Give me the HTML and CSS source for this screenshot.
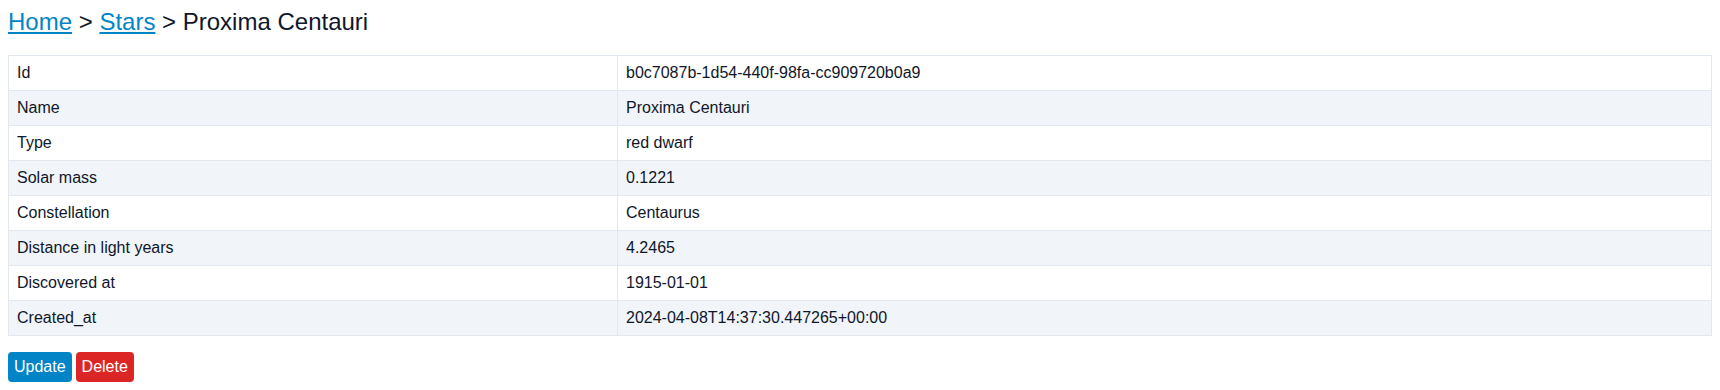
FILE: index.html
```html
<!DOCTYPE html>
<html lang="en">
<head>
<meta charset="utf-8">
<title>Proxima Centauri</title>
<link rel="stylesheet" href="styles.css">
</head>
<body>
<main class="page">
  <h1 class="crumbs"><a href="#">Home</a> &gt; <a href="#">Stars</a> &gt; Proxima Centauri</h1>
  <table class="details">
    <colgroup><col class="col-label"><col></colgroup>
    <tbody>
      <tr><td>Id</td><td>b0c7087b-1d54-440f-98fa-cc909720b0a9</td></tr>
      <tr><td>Name</td><td>Proxima Centauri</td></tr>
      <tr><td>Type</td><td>red dwarf</td></tr>
      <tr><td>Solar mass</td><td>0.1221</td></tr>
      <tr><td>Constellation</td><td>Centaurus</td></tr>
      <tr><td>Distance in light years</td><td>4.2465</td></tr>
      <tr><td>Discovered at</td><td>1915-01-01</td></tr>
      <tr><td>Created_at</td><td>2024-04-08T14:37:30.447265+00:00</td></tr>
    </tbody>
  </table>
  <div class="actions">
    <button class="btn btn-blue" type="button">Update</button>
    <button class="btn btn-red" type="button">Delete</button>
  </div>
</main>
</body>
</html>
```

FILE: styles.css
```css
html, body {
  margin: 0;
  padding: 0;
  background: #ffffff;
}
body {
  padding: 8px;
  font-family: "Liberation Sans", Arial, Helvetica, sans-serif;
  color: #0f172a;
  font-size: 16px;
}
.page {
  display: flex;
  flex-direction: column;
}
.crumbs {
  margin: 0 0 20px 0;
  font-size: 24px;
  font-weight: 400;
  line-height: 27px;
}
.crumbs a {
  color: #0284c7;
  text-decoration: underline;
}
.details {
  width: 100%;
  border-collapse: collapse;
  table-layout: fixed;
  border: 1px solid #e2e8f0;
}
.col-label {
  width: 609px;
}
.details td {
  border: 1px solid #e2e8f0;
  padding: 8px;
  line-height: 18px;
  text-align: left;
  vertical-align: middle;
}
.details tr:nth-child(even) td {
  background: #f1f5f9;
}
.actions {
  margin-top: 16px;
  display: flex;
  gap: 4px;
}
.btn {
  font-family: inherit;
  font-size: 16px;
  line-height: 18px;
  padding: 6px 6px;
  border: 0;
  border-radius: 4px;
  color: #ffffff;
  cursor: pointer;
}
.btn-blue {
  background: #0284c7;
}
.btn-red {
  background: #dc2626;
}
```
